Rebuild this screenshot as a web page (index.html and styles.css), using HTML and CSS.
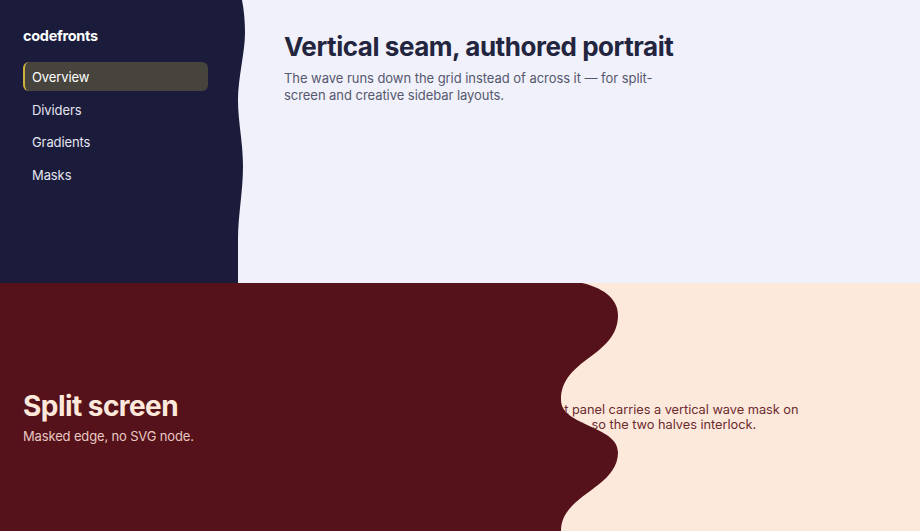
FILE: index.html
```html
<!DOCTYPE html>
<html lang="en">
<head>
<meta charset="utf-8">
<title>codefronts — Vertical seam</title>
<link rel="stylesheet" href="styles.css">
</head>
<body>
<div class="page">
  <section class="top">
    <aside class="sidebar">
      <div class="brand">codefronts</div>
      <nav class="nav">
        <a class="nav-item active" href="#">Overview</a>
        <a class="nav-item" href="#">Dividers</a>
        <a class="nav-item" href="#">Gradients</a>
        <a class="nav-item" href="#">Masks</a>
      </nav>
    </aside>
    <main class="main">
      <h1 class="title">Vertical seam, authored portrait</h1>
      <p class="lead">The wave runs down the grid instead of across it — for split-screen and creative sidebar layouts.</p>
    </main>
  </section>
  <section class="split">
    <div class="split-left">
      <h2 class="split-title">Split screen</h2>
      <p class="split-sub">Masked edge, no SVG node.</p>
    </div>
    <div class="split-right">
      <p class="split-text">The right panel carries a vertical wave mask on its left edge, so the two halves interlock.</p>
    </div>
  </section>
</div>
</body>
</html>
```

FILE: styles.css
```css
* { box-sizing: border-box; }
html, body { margin: 0; padding: 0; }
body {
  font-family: Inter, "Noto Sans", "Liberation Sans", sans-serif;
  background: #f0f1fa;
  width: 920px;
  height: 531px;
  overflow: hidden;
}
.page {
  display: grid;
  grid-template-rows: 283px 248px;
  height: 531px;
}
.top {
  display: grid;
  grid-template-columns: 246px 1fr;
  background: #f0f1fa;
}
.sidebar {
  background: #1b1c3c;
  padding: 27px 38px 0 23px;
  clip-path: path('M0,0 L242,0 C244,10 245,22 245,33 C245,52 238,78 238,100 C238,122 243,142 243,166 C243,192 238,215 238,240 L238,283 L0,283 Z');
}
.brand {
  color: #ffffff;
  font-weight: 700;
  font-size: 14.5px;
  letter-spacing: -0.3px;
  line-height: 18px;
  margin-bottom: 17px;
}
.nav {
  display: flex;
  flex-direction: column;
  gap: 3.7px;
}
.nav-item {
  display: block;
  color: #e4e4ef;
  text-decoration: none;
  font-size: 13px;
  letter-spacing: -0.1px;
  line-height: 17px;
  padding: 7px 9px 5px 7px;
  border-radius: 6px;
  border-left: 2px solid transparent;
  height: 29px;
}
.nav-item.active {
  background: #47443d;
  border-left-color: #cdb33c;
  color: #ffffff;
}
.main {
  padding: 31px 40px 0 38px;
}
.title {
  margin: 0;
  font-size: 26px;
  line-height: 32px;
  font-weight: 700;
  color: #23253e;
  letter-spacing: -0.45px;
}
.lead {
  margin: 7px 0 0;
  max-width: 380px;
  font-size: 13px;
  letter-spacing: -0.05px;
  line-height: 17px;
  color: #56586f;
}
.split {
  display: grid;
  grid-template-columns: 1fr 1fr;
  background: #56121a;
}
.split-left {
  display: flex;
  flex-direction: column;
  justify-content: center;
  padding: 20px 23px 0;
}
.split-title {
  margin: 0;
  font-size: 28px;
  line-height: 34px;
  font-weight: 700;
  color: #fde9dc;
  letter-spacing: -0.55px;
}
.split-sub {
  margin: 4px 0 0;
  font-size: 13px;
  letter-spacing: -0.15px;
  line-height: 18px;
  color: #e7c8c3;
}
.split-right {
  background: #fde9dc;
  display: flex;
  align-items: center;
  padding: 20px 40px 0 54px;
  clip-path: path('M122,0 C140,4 158,14 158,32 C158,74 101,75 101,117 C101,143 158,143 158,169 C158,206 101,211 101,248 L460,248 L460,0 Z');
}
.split-text {
  margin: 0;
  max-width: 290px;
  font-size: 12.8px;
  letter-spacing: -0.03px;
  line-height: 15.5px;
  color: #6b2b2e;
}
```
